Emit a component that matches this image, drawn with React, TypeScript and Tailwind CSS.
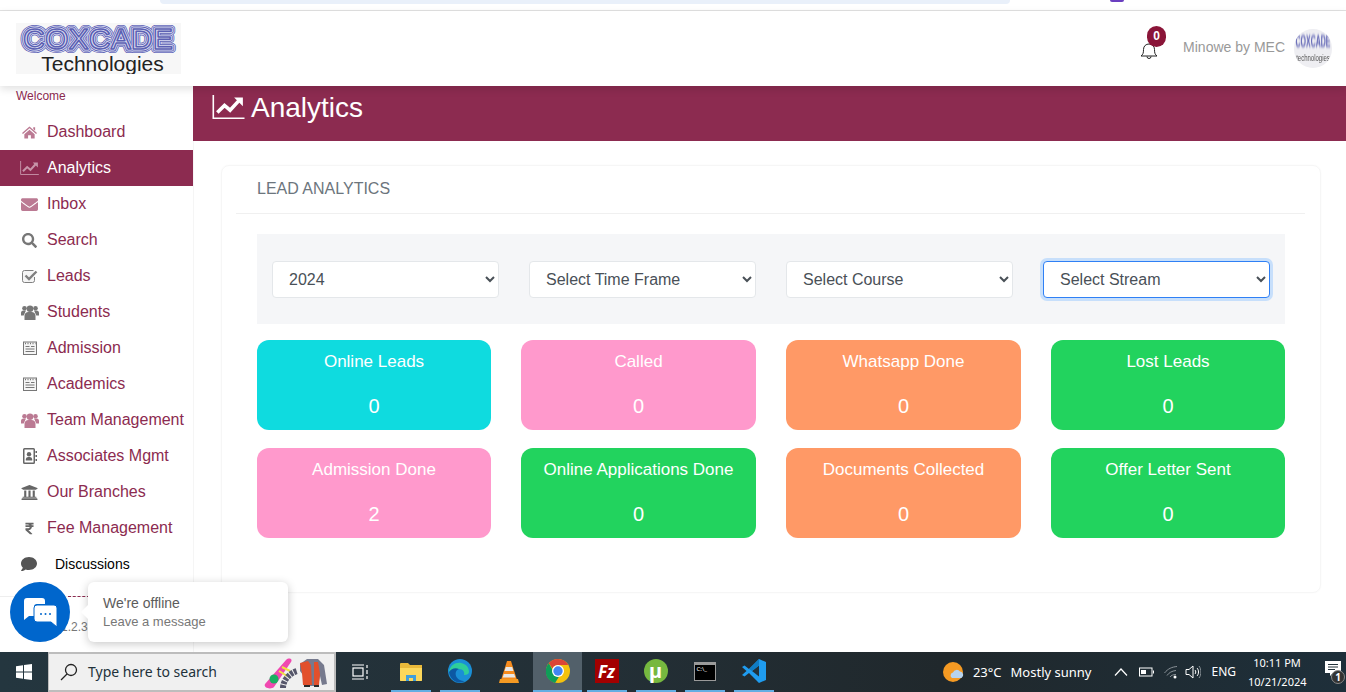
import React from 'react';
import { FaEnvelope, FaSearch, FaUniversity, FaRupeeSign, FaComment } from 'react-icons/fa';

const HomeIcon = () => (
  <svg width="15" height="13" viewBox="0 0 16 13" fill="currentColor">
    <path d="M8 0 16 7l-1 1-7-6-7 6-1-1z" />
    <path d="M12 1h2v3.500l-2-1.700z" />
    <path d="M2.500 8.300 8 3.500l5.500 4.800V13H9.500V9.500h-3V13h-4z" />
  </svg>
);

const ChartIcon = ({ width = 19, height = 14 }: { width?: number; height?: number }) => (
  <svg width={width} height={height} viewBox="0 0 20 15" fill="none" stroke="currentColor">
    <path d="M.5 0v14.500H20" strokeWidth="1" />
    <path d="M3 11l4.500-4.500 3.500 3L16.500 3.500" strokeWidth="2.200" />
    <path d="M13.500 1.500H19v5.500z" fill="currentColor" stroke="none" />
  </svg>
);

const UsersIcon = () => (
  <svg width="18" height="15" viewBox="0 0 18 15" fill="currentColor">
    <circle cx="3.500" cy="3.200" r="2.300" />
    <circle cx="14.500" cy="3.200" r="2.300" />
    <circle cx="9" cy="3.800" r="3.300" />
    <path d="M3.500 15v-4.500a4 4 0 0 1 4-3.500h3a4 4 0 0 1 4 3.500V15z" />
    <path d="M0 10.500V8a2.500 2.500 0 0 1 2.500-2.500H5L2.700 10.500zM18 10.500V8a2.500 2.500 0 0 0-2.500-2.500H13l2.300 5z" />
  </svg>
);

const NotepadIcon = () => (
  <svg width="14" height="14" viewBox="0 0 14 14" fill="none" stroke="currentColor" strokeWidth="1">
    <rect x="0.500" y="1" width="13" height="12.500" fill="#f5f5f5" />
    <path d="M2 2.500h1M4.500 2.500h1M7 2.500h1M9.500 2.500h1M12 2.500h.5" strokeWidth="1.500" />
    <path d="M2.500 5.500h4M8 5.500h3.500M2.500 8h9M2.500 10.500h9" />
  </svg>
);

const CheckBoxIcon = () => (
  <svg width="16" height="14" viewBox="0 0 16 14" fill="none" stroke="currentColor">
    <path d="M12.500 8v3.500a2 2 0 0 1-2 2h-8a2 2 0 0 1-2-2v-8a2 2 0 0 1 2-2h9" fill="#f5f5f5" strokeWidth="1" />
    <path d="M3.500 6.500l3.500 3.500 7.500-7.500" strokeWidth="2.400" />
  </svg>
);

const ContactIcon = () => (
  <svg width="14" height="16" viewBox="0 0 14 16" fill="currentColor">
    <path d="M0 1.500A1.500 1.500 0 0 1 1.500 0h9A1.500 1.500 0 0 1 12 1.500v13a1.500 1.500 0 0 1-1.500 1.500h-9A1.500 1.500 0 0 1 0 14.500zM1.500 1.500v13h9v-13z" fillRule="evenodd" />
    <circle cx="6" cy="6.200" r="2.200" />
    <path d="M2.800 12.500v-1.500a2.500 2.500 0 0 1 2.500-2h1.400a2.500 2.500 0 0 1 2.500 2v1.500z" />
    <path d="M12.500 3H14v2h-1.500zM12.500 7H14v2h-1.500zM12.500 11H14v2h-1.500z" />
  </svg>
);

const navItems = [
  { label: 'Dashboard', icon: <HomeIcon />, tint: 'text-[#bb7a93]' },
  { label: 'Analytics', icon: <ChartIcon />, tint: 'text-[#c795a9]', active: true },
  { label: 'Inbox', icon: <FaEnvelope size={17} />, tint: 'text-[#bb7a93]' },
  { label: 'Search', icon: <FaSearch size={15} />, tint: 'text-[#777777]' },
  { label: 'Leads', icon: <CheckBoxIcon />, tint: 'text-[#808080]' },
  { label: 'Students', icon: <UsersIcon />, tint: 'text-[#777777]' },
  { label: 'Admission', icon: <NotepadIcon />, tint: 'text-[#777777]' },
  { label: 'Academics', icon: <NotepadIcon />, tint: 'text-[#777777]' },
  { label: 'Team Management', icon: <UsersIcon />, tint: 'text-[#bb7a93]' },
  { label: 'Associates Mgmt', icon: <ContactIcon />, tint: 'text-[#666666]' },
  { label: 'Our Branches', icon: <FaUniversity size={17} />, tint: 'text-[#666666]' },
  { label: 'Fee Management', icon: <FaRupeeSign size={13} />, tint: 'text-[#666666]' },
];

const stats = [
  { title: 'Online Leads', value: 0, color: 'bg-[#0fdbdf]' },
  { title: 'Called', value: 0, color: 'bg-[#ff99cc]' },
  { title: 'Whatsapp Done', value: 0, color: 'bg-[#ff9966]' },
  { title: 'Lost Leads', value: 0, color: 'bg-[#22d35e]' },
  { title: 'Admission Done', value: 2, color: 'bg-[#ff99cc]' },
  { title: 'Online Applications Done', value: 0, color: 'bg-[#22d35e]' },
  { title: 'Documents Collected', value: 0, color: 'bg-[#ff9966]' },
  { title: 'Offer Letter Sent', value: 0, color: 'bg-[#22d35e]' },
];

const filters = ['2024', 'Select Time Frame', 'Select Course', 'Select Stream'];

const Logo = () => (
  <div className="w-[165px] h-[51px] bg-[#f7f7f7] flex flex-col items-center overflow-hidden">
    <svg width="165" height="31" viewBox="0 0 165 31" fill="none" strokeLinejoin="round">
      <defs>
        <text
          id="logo-word"
          x="82"
          y="26"
          textAnchor="middle"
          fontSize="30"
          fontFamily="'Liberation Sans', Arial, sans-serif"
          textLength="150"
          lengthAdjust="spacingAndGlyphs"
        >
          COXCADE
        </text>
      </defs>
      <use href="#logo-word" stroke="#5b60b3" strokeWidth="8" />
      <use href="#logo-word" stroke="#dcdef2" strokeWidth="6.500" />
      <use href="#logo-word" stroke="#5b60b3" strokeWidth="4.800" />
      <use href="#logo-word" stroke="#dcdef2" strokeWidth="3.200" />
      <use href="#logo-word" stroke="#5b60b3" strokeWidth="1.500" />
    </svg>
    <div className="pl-[8px] text-[21px] leading-[20px] text-[#222222]">Technologies</div>
  </div>
);

const Avatar = () => (
  <div className="w-[38px] h-[39px] rounded-full bg-[#eeeef2] overflow-hidden flex flex-col items-center pt-[8px]">
    <span className="text-[7px] leading-[10px] font-black text-[#5d62b4] blur-[0.6px] scale-y-[2.3]">COXCADE</span>
    <span className="mt-[7px] text-[6px] leading-[8px] text-[#555555] blur-[0.5px] scale-y-150">technologies</span>
  </div>
);

const Bell = () => (
  <svg width="18" height="18" viewBox="0 0 18 18" fill="none" stroke="#222222" strokeWidth="1">
    <path d="M1 15c2-1.500 2.500-3 2.500-6.500C3.500 5 6 3 9 3s5.500 2 5.500 5.500c0 3.500.5 5 2.500 6.500H1z" />
    <path d="M7 15.500a2 2 0 0 0 4 0" />
  </svg>
);

const ChatIcon = () => (
  <svg width="33" height="29" viewBox="0 0 33 29">
    <path d="M3 0h15a3 3 0 0 1 3 3v3h-8a3 3 0 0 0-3 3v9H5l-5 4V3a3 3 0 0 1 3-3z" fill="#ffffff" />
    <path d="M13 7h17a3 3 0 0 1 3 3v19l-6-5H13a3 3 0 0 1-3-3V10a3 3 0 0 1 3-3z" fill="#ffffff" stroke="#0066cc" strokeWidth="1" />
    <circle cx="17" cy="16" r="1" fill="#0066cc" />
    <circle cx="21.500" cy="16" r="1" fill="#0066cc" />
    <circle cx="26" cy="16" r="1" fill="#0066cc" />
  </svg>
);

const WindowsIcon = () => (
  <svg width="16" height="16" viewBox="0 0 16 16" fill="#ffffff">
    <path d="M0 2.300 7 1.300v6.300H0zM8 1.100 16 0v7.600H8zM0 8.500h7v6.300l-7-1zM8 8.500h8V16l-8-1.100z" />
  </svg>
);

const SearchGlass = () => (
  <svg width="18" height="18" viewBox="0 0 18 18" fill="none" stroke="#222222" strokeWidth="1.300">
    <circle cx="11" cy="7" r="5.500" />
    <path d="M7 11l-6 6" />
  </svg>
);

const SearchArt = () => (
  <svg width="66" height="36" viewBox="0 0 66 36" className="ml-auto">
    <path d="M3 30 24 6c3-3 7-1 5 2L12 33c-3 3-11 1-9-3z" fill="#f048b0" />
    <path d="M17 17l8 5M20 13l8 4" stroke="#f0e040" strokeWidth="2" />
    <circle cx="12" cy="25" r="4.500" fill="#18b060" />
    <path d="M21 34c0-8 7-15 14-17" stroke="#55566a" strokeWidth="6" strokeDasharray="3 1" fill="none" />
    <path d="M38 10l7-5h11l6 6 3 19-5 1-2-9-2 10H42l-1-11-3-4z" fill="#767a8e" />
    <path d="M38 9l8-2 3 4 1 20h-9l-1-12z" fill="#e2502c" />
    <path d="M52 8h4l2 12-1 11h-5z" fill="#e2502c" />
    <path d="M42 31h6v2h-6zM52 31h5v2h-5z" fill="#2a2a2a" />
  </svg>
);

const TaskView = () => (
  <svg width="17" height="16" viewBox="0 0 17 16" fill="none" stroke="#ffffff" strokeWidth="1.200">
    <rect x="1" y="4" width="10" height="8" />
    <path d="M0 1h12M0 15h12M15 1v3M15 6v4M15 12v3" />
  </svg>
);

const FolderIcon = () => (
  <svg width="22" height="19" viewBox="0 0 22 19">
    <path d="M0 2a1 1 0 0 1 1-1h7l2 2h12v15a1 1 0 0 1-1 1H1a1 1 0 0 1-1-1z" fill="#e9b93a" />
    <path d="M0 6h22v12a1 1 0 0 1-1 1H1a1 1 0 0 1-1-1z" fill="#fbd75b" />
    <path d="M6 19v-6h10v6h-3v-3H9v3z" fill="#3f9fdc" />
  </svg>
);

const EdgeIcon = () => (
  <svg width="24" height="24" viewBox="0 0 24 24">
    <circle cx="12" cy="12" r="12" fill="#1a8fd6" />
    <path d="M1 13C2 6 8 3 13 4c5 1 8 4 8 9 0 2-2 3-5 3 1-3-1-6-5-6-5 0-8 3-10 3z" fill="#2fce9a" />
    <path d="M1 13c2-3 6-5 10-3-3 1-4 4-3 7 1 3 5 5 9 5-7 4-15-1-16-9z" fill="#0c59a4" />
  </svg>
);

const VlcIcon = () => (
  <svg width="20" height="24" viewBox="0 0 20 24">
    <path d="M8 1h4l6 19H2z" fill="#f78c1e" />
    <path d="M6.800 7h6.400l1.200 4H5.600zM4.800 14h10.400l1.200 3.500H3.700z" fill="#e8e8e8" />
    <path d="M1 19h18l1 4H0z" fill="#f59a23" />
  </svg>
);

const ChromeIcon = () => (
  <svg width="24" height="24" viewBox="0 0 24 24">
    <circle cx="12" cy="12" r="12" fill="#f4c20d" />
    <path d="M12 0a12 12 0 0 1 10.400 6H12a6 6 0 0 0-5.500 3.500L2.800 4.300A12 12 0 0 1 12 0z" fill="#db4437" />
    <path d="M2.800 4.300 7 11.500a6 6 0 0 0 5.800 6.400L9 24A12 12 0 0 1 2.800 4.300z" fill="#0f9d58" />
    <circle cx="12" cy="12" r="6" fill="#ffffff" />
    <circle cx="12" cy="12" r="4.700" fill="#4285f4" />
  </svg>
);

const FileZillaIcon = () => (
  <div className="w-[24px] h-[24px] bg-[#a30000] flex items-center justify-center text-white font-bold italic text-[17px] leading-none">
    Fz
  </div>
);

const TorrentIcon = () => (
  <div className="w-[24px] h-[24px] rounded-full bg-[#76b83f] flex items-center justify-center text-white font-bold text-[20px] leading-none">
    µ
  </div>
);

const CmdIcon = () => (
  <div className="w-[22px] h-[19px] bg-black border border-[#9a9a9a] border-t-[3px] flex items-start px-[2px] text-[6px] leading-[9px] text-white">
    C:\_
  </div>
);

const VsCodeIcon = () => (
  <svg width="24" height="24" viewBox="0 0 24 24">
    <path d="M17 0 7 10 2.500 6.500 0 8l4.500 4L0 16l2.500 1.500L7 14l10 10 7-3V3z" fill="#1f9cf0" />
    <path d="M17 6.500v11L10 12z" fill="#22323b" />
    <path d="M17 0 7 10l3 2 7-5.500z" fill="#0f7cc4" />
  </svg>
);

const WeatherIcon = () => (
  <svg width="22" height="20" viewBox="0 0 22 20">
    <circle cx="10" cy="10" r="10" fill="#f59a23" />
    <path d="M9 16a3 3 0 0 1 1-5.500 4 4 0 0 1 7-1 3.500 3.500 0 0 1 1.500 6.500z" fill="#b7d3ee" />
  </svg>
);

const BatteryIcon = () => (
  <svg width="15" height="10" viewBox="0 0 15 10" fill="none" stroke="#ffffff">
    <rect x="0.500" y="1" width="12.500" height="8" />
    <rect x="2" y="3" width="5" height="4" fill="#ffffff" stroke="none" />
    <path d="M14.500 3.500v3" />
  </svg>
);

const WifiIcon = () => (
  <svg width="14" height="13" viewBox="0 0 14 13" fill="none" stroke="#8a9298" strokeWidth="1">
    <path d="M0.500 7C4 2.500 8 1 13 0.500M3 9.500c2-3 5-4.500 9-5M6 11c1-1.500 3-2.500 6-2.500" />
    <circle cx="11" cy="11" r="1.500" fill="#ffffff" stroke="none" />
  </svg>
);

const SpeakerIcon = () => (
  <svg width="16" height="14" viewBox="0 0 16 14" fill="none" stroke="#ffffff" strokeWidth="1">
    <path d="M1 4.500h3L8 1v12L4 9.500H1z" />
    <path d="M10 5c1 1 1 3 0 4M12 3c2 2 2 6 0 8" />
    <path d="M14 1c2.500 3 2.500 9 0 12" stroke="#8a9298" />
  </svg>
);

const taskbarApps = [
  { icon: FolderIcon, key: 'folder' },
  { icon: EdgeIcon, key: 'edge' },
  { icon: VlcIcon, key: 'vlc', plain: true },
  { icon: ChromeIcon, key: 'chrome', active: true },
  { icon: FileZillaIcon, key: 'filezilla' },
  { icon: TorrentIcon, key: 'torrent' },
  { icon: CmdIcon, key: 'cmd' },
  { icon: VsCodeIcon, key: 'vscode' },
];

const Taskbar = () => (
  <div className="h-10 shrink-0 flex items-stretch bg-[linear-gradient(90deg,#24363f,#232f36_45%,#20282c_70%,#1e2f3a)] text-white font-['Noto_Sans',sans-serif]">
    <div className="w-12 flex items-center justify-center">
      <WindowsIcon />
    </div>
    <div className="w-[288px] bg-[#f0f0f0] border-2 border-[#bdbdbd] border-l-[1px] flex items-center pl-[11px] pr-[6px] text-[#22323b]">
      <SearchGlass />
      <span className="ml-[10px] text-[14px] leading-none whitespace-nowrap">Type here to search</span>
      <SearchArt />
    </div>
    <div className="w-[49px] flex items-center justify-center">
      <TaskView />
    </div>
    <div className="w-[1px]" />
    <div className="flex">
      {taskbarApps.map((app) => {
        const Icon = app.icon;
        return (
          <div
            key={app.key}
            className={`w-[49px] flex flex-col items-center ${app.active ? 'bg-[#52606a]' : ''}`}
          >
            <div className="flex-1 flex items-center justify-center">
              <Icon />
            </div>
            {!app.plain && <div className={`h-[2px] bg-[#62aee3] ${app.active ? 'w-full' : 'w-10'}`} />}
          </div>
        );
      })}
    </div>
    <div className="ml-auto flex items-center pr-[5px]">
      <WeatherIcon />
      <span className="ml-2 text-[13px] leading-none">23°C</span>
      <span className="ml-[9px] text-[13px] leading-none">Mostly sunny</span>
      <svg width="14" height="8" viewBox="0 0 14 8" fill="none" stroke="#ffffff" strokeWidth="1.200" className="ml-[23px]">
        <path d="M1 7.500 7 1l6 6.500" />
      </svg>
      <div className="ml-[11px]"><BatteryIcon /></div>
      <div className="ml-[10px]"><WifiIcon /></div>
      <div className="ml-[7px]"><SpeakerIcon /></div>
      <span className="ml-[10px] text-[12px] leading-none">ENG</span>
      <div className="ml-[12px] w-[58px] text-center text-[11px] leading-[19px] whitespace-nowrap">
        <div>10:11 PM</div>
        <div>10/21/2024</div>
      </div>
      <div className="relative ml-[19px] w-[16px] h-[24px]">
        <svg width="16" height="15" viewBox="0 0 16 15" className="mt-[1px]">
          <path d="M0 0h16v12H8l-3 3v-3H0z" fill="#ffffff" />
          <path d="M3 3.500h10M3 6h10M3 8.500h7" stroke="#22323b" />
        </svg>
        <span className="absolute left-[6px] top-[10px] w-[14px] h-[14px] rounded-full bg-[#333333] border border-[#888888] text-[10px] leading-[12px] text-center font-bold">
          1
        </span>
      </div>
    </div>
  </div>
);

const ChatWidget = () => (
  <div className="absolute left-[10px] top-[582px] flex items-center font-['Liberation_Sans',Arial,sans-serif]">
    <div className="w-[60px] h-[60px] rounded-full bg-[#0066cc] flex items-center justify-center">
      <ChatIcon />
    </div>
    <div className="relative ml-[18px] w-[200px] h-[60px] rounded-md bg-white shadow-[0_2px_10px_rgba(0,0,0,0.22)] pl-[15px] pt-[13px]">
      <span className="absolute -left-[5px] top-[25px] w-[10px] h-[10px] rotate-45 bg-white" />
      <div className="text-[14px] leading-[16px] text-[#5c5c5c]">We're offline</div>
      <div className="mt-[3px] text-[13px] leading-[16px] text-[#777777]">Leave a message</div>
    </div>
  </div>
);

export default function App() {
  return (
    <div className="relative h-[692px] w-full overflow-hidden flex flex-col bg-white font-['Liberation_Sans',Arial,sans-serif]">
      {/* browser chrome left over at the top */}
      <div className="h-[11px] shrink-0 border-b border-[#e2e2e2] flex items-start">
        <div className="ml-[160px] w-[850px] h-[4px] rounded-b-full bg-[#e9f0fa]" />
        <div className="ml-[100px] w-[14px] h-[2px] rounded-b bg-[#6a3fc0]" />
      </div>

      {/* header */}
      <header className="relative z-10 h-[75px] shrink-0 flex items-start bg-white shadow-[0_3px_8px_rgba(0,0,0,0.12)]">
        <div className="ml-4 mt-3">
          <Logo />
        </div>
        <div className="ml-auto h-full flex items-center pr-[14px]">
          <div className="relative mr-[25px] mt-[2px]">
            <Bell />
            <span className="absolute -top-[15px] left-[7px] w-[19px] h-[21px] rounded-full bg-[#8a1538] text-white text-[12px] leading-[21px] text-center font-bold">
              0
            </span>
          </div>
          <span className="text-[14px] text-[#999999] -mt-[2px]">Minowe by MEC</span>
          <div className="ml-[9px]">
            <Avatar />
          </div>
        </div>
      </header>

      <div className="flex-1 flex min-h-0">
        {/* sidebar */}
        <aside className="w-[193px] shrink-0 overflow-hidden">
          <div className="pl-4 pt-[3px] text-[12px] leading-[14px] text-[#8c2b50]">Welcome</div>
          <nav className="mt-[11px]">
            {navItems.map((item) => (
              <div
                key={item.label}
                className={`h-9 flex items-center ${item.active ? 'bg-[#8c2b50] text-white' : 'text-[#8c2b50]'}`}
              >
                <span className={`w-[47px] pl-[12px] flex justify-center ${item.tint}`}>{item.icon}</span>
                <span className="text-[16px] whitespace-nowrap">{item.label}</span>
              </div>
            ))}
            <div className="h-9 flex items-center text-black">
              <span className="w-[55px] pl-[21px] flex justify-start text-[#555555]">
                <FaComment size={16} />
              </span>
              <span className="text-[14px]">Discussions</span>
            </div>
          </nav>
          <div className="mt-[14px] border-t border-[#eeeeee] h-[55px] text-[12px] text-[#777777]">
            <div className="ml-[68px] w-[22px] -mt-[1px] border-t border-dashed border-[#8c2b50]" />
            <div className="mt-[22px] pl-[61px] leading-[16px]">1.2.35</div>
          </div>
        </aside>

        {/* main column */}
        <main className="flex-1 min-w-0">
          <div className="h-[55px] bg-[#8c2b50] text-white flex items-start pl-[19px] pt-[2px]">
            <span className="mt-[7px]">
              <ChartIcon width={33} height={24} />
            </span>
            <h1 className="ml-[6px] text-[28px] leading-[40px]">Analytics</h1>
          </div>

          <div className="h-[511px] border-l border-[#f5f5f5] pl-[27px] pt-6">
            <section className="w-[1100px] h-[428px] rounded-lg border border-[#f6f6f6] shadow-[0_0_2px_rgba(0,0,0,0.03)]">
              <div className="ml-[14px] mr-[15px] h-[48px] border-b border-[#f0f0f0] pl-[21px] pb-[2px] flex items-center text-[16px] text-[#6c757d]">
                LEAD ANALYTICS
              </div>
              <div className="mx-[35px] mt-5">
                <div className="h-[90px] bg-[#f5f6f8] px-[15px] pt-[27px] grid grid-cols-4 gap-x-[30px] items-start">
                  {filters.map((label, i) => (
                    <select
                      key={label}
                      defaultValue={label}
                      className={`h-[37px] w-full rounded-[4px] bg-white px-3 text-[16px] text-[#495057] border ${
                        i === 3
                          ? 'border-[#2f80f5] shadow-[0_0_0_3px_#c7dffb]'
                          : 'border-[#e4e7ea]'
                      }`}
                    >
                      <option>{label}</option>
                    </select>
                  ))}
                </div>
                <div className="mt-4 grid grid-cols-[234px_235px_235px_234px] gap-x-[30px] gap-y-[18px]">
                  {stats.map((stat) => (
                    <div
                      key={stat.title}
                      className={`h-[90px] rounded-xl text-white text-center flex flex-col pt-[12px] ${stat.color}`}
                    >
                      <div className="text-[17px] leading-5">{stat.title}</div>
                      <div className="mt-[22px] text-[20px] leading-6">{stat.value}</div>
                    </div>
                  ))}
                </div>
              </div>
            </section>
          </div>
        </main>
      </div>

      <Taskbar />
      <ChatWidget />
    </div>
  );
}
